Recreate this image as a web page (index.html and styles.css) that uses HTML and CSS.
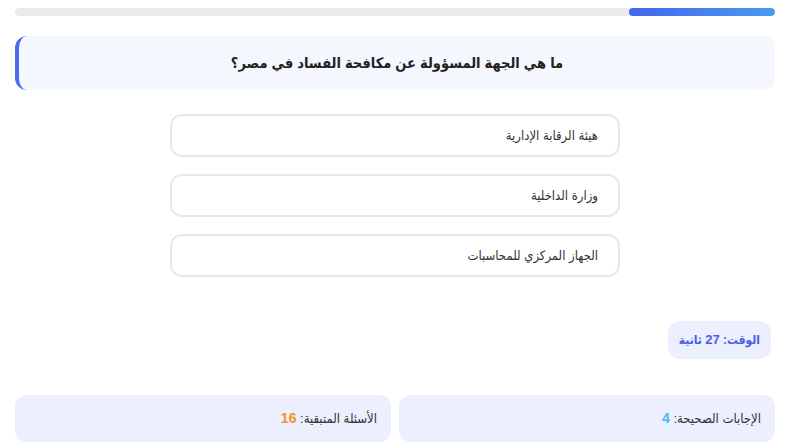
FILE: index.html
```html
<!DOCTYPE html>
<html lang="ar" dir="rtl">
<head>
<meta charset="utf-8">
<title>اختبار</title>
<link rel="stylesheet" href="styles.css">
</head>
<body>
<div class="quiz">
  <div class="progress"><div class="progress-fill" style="width:19.2%"></div></div>
  <div class="question">ما هي الجهة المسؤولة عن مكافحة الفساد في مصر؟</div>
  <div class="options">
    <div class="option">هيئة الرقابة الإدارية</div>
    <div class="option">وزارة الداخلية</div>
    <div class="option">الجهاز المركزي للمحاسبات</div>
  </div>
  <div class="timer-row"><div class="timer">الوقت: <span class="tnum">27</span> ثانية</div></div>
  <div class="stats">
    <div class="stat">الإجابات الصحيحة: <span class="num correct">4</span></div>
    <div class="stat">الأسئلة المتبقية: <span class="num remaining">16</span></div>
  </div>
</div>
</body>
</html>
```
FILE: styles.css
```css
html, body {
  margin: 0;
  padding: 0;
  background: #ffffff;
}
body {
  font-family: "Liberation Sans", "DejaVu Sans Condensed", "DejaVu Sans", Arial, sans-serif;
  color: #333333;
}
.quiz {
  width: 760px;
  margin: 0 auto;
  padding-top: 8px;
  display: flex;
  flex-direction: column;
}
.progress {
  height: 8px;
  background: #e8eaed;
  border-radius: 4px;
  overflow: hidden;
  display: flex;
}
.progress-fill {
  height: 100%;
  background: linear-gradient(to left, #4a9af0, #4466ee);
  border-radius: 4px;
}
.question {
  margin-top: 20px;
  background: #f4f7fe;
  border-left: 4px solid #4a6cf0;
  border-radius: 12px;
  padding: 16px 20px;
  font-size: 14.5px;
  line-height: 22px;
  font-weight: bold;
  color: #222222;
  text-align: center;
}
.options {
  margin: 24px auto 0;
  width: 450px;
  display: flex;
  flex-direction: column;
  gap: 17px;
}
.option {
  border: 2px solid #e6e8ec;
  border-radius: 12px;
  padding: 10px 20px;
  font-size: 13px;
  line-height: 19px;
  color: #333333;
  background: #ffffff;
}
.timer-row {
  margin-top: 44px;
  display: flex;
  padding-right: 4px;
}
.timer {
  background: #eceffd;
  border-radius: 12px;
  padding: 10px 11px;
  font-size: 12px;
  line-height: 18px;
  font-weight: bold;
  color: #4a5ee6;
}
.tnum {
  font-size: 13px;
}
.stats {
  margin-top: 36px;
  display: flex;
  gap: 8px;
}
.stat {
  flex: 1;
  background: #eceffd;
  border-radius: 12px;
  padding: 14px 14px;
  font-size: 13px;
  line-height: 18px;
  color: #333333;
}
.num {
  font-weight: bold;
  font-size: 14px;
}
.correct { color: #4ab8f0; }
.remaining { color: #f7941e; }
```
